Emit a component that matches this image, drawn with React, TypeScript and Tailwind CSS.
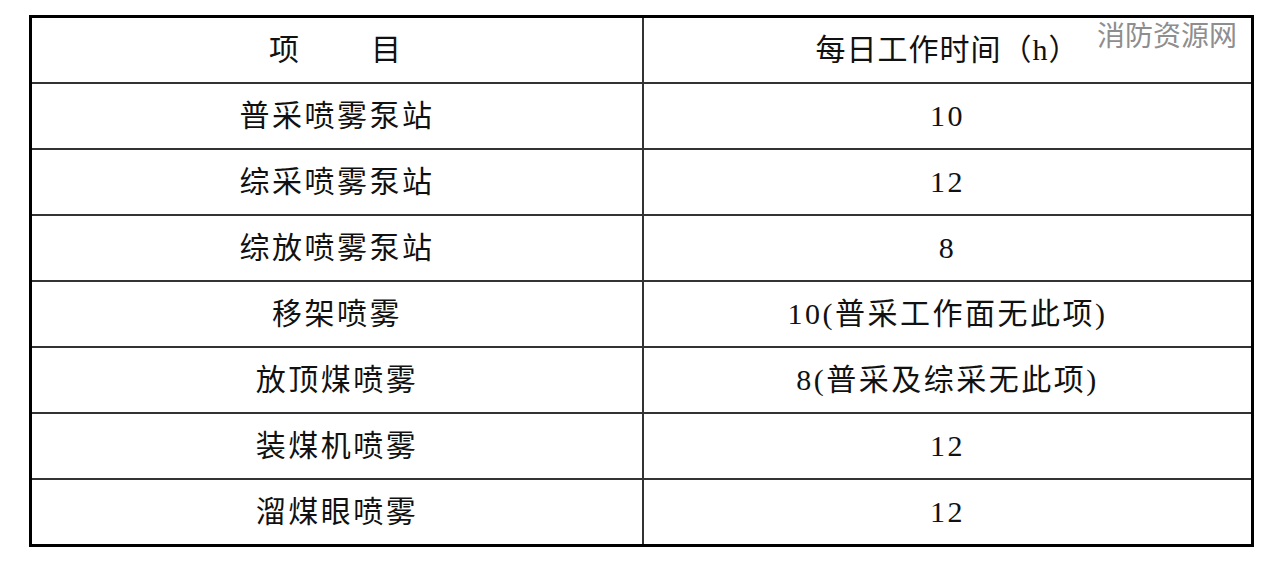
import React from 'react';

interface Row {
  item: string;
  hours: string;
}

const ROWS: Row[] = [
  { item: '普采喷雾泵站', hours: '10' },
  { item: '综采喷雾泵站', hours: '12' },
  { item: '综放喷雾泵站', hours: '8' },
  { item: '移架喷雾', hours: '10(普采工作面无此项)' },
  { item: '放顶煤喷雾', hours: '8(普采及综采无此项)' },
  { item: '装煤机喷雾', hours: '12' },
  { item: '溜煤眼喷雾', hours: '12' },
];

const FONT = "font-['Liberation_Serif','Noto_Sans_CJK_SC',serif]";

export default function App() {
  return (
    <div className={`relative w-[1271px] h-[571px] bg-white text-[#111] ${FONT}`}>
      <div className="pt-[15px] pl-[29px]">
        <div className="w-[1225px] border-[3px] border-black">
          {/* Header */}
          <div className="grid grid-cols-[610px_1fr] h-[64px]">
            <div className="flex items-center justify-center text-[30px] tracking-[4px] leading-none">
              项　　目
            </div>
            <div className="flex items-center justify-center border-l-2 border-[#333] text-[30px] tracking-[1px] leading-none">
              每日工作时间（h）
            </div>
          </div>

          {/* Body rows */}
          {ROWS.map((row) => (
            <div key={row.item} className="grid grid-cols-[610px_1fr] h-[66px] border-t-2 border-[#333]">
              <div className="flex items-center justify-center text-[30px] tracking-[2.5px] leading-none">
                {row.item}
              </div>
              <div className="flex items-center justify-center border-l-2 border-[#333] text-[30px] tracking-[2.5px] leading-none">
                {row.hours}
              </div>
            </div>
          ))}
        </div>
      </div>

      {/* Watermark */}
      <div className="absolute left-[1097px] top-[20px] text-[28px] leading-none text-[#8e8e8e] font-['Noto_Sans_CJK_SC',sans-serif]">
        消防资源网
      </div>
    </div>
  );
}
